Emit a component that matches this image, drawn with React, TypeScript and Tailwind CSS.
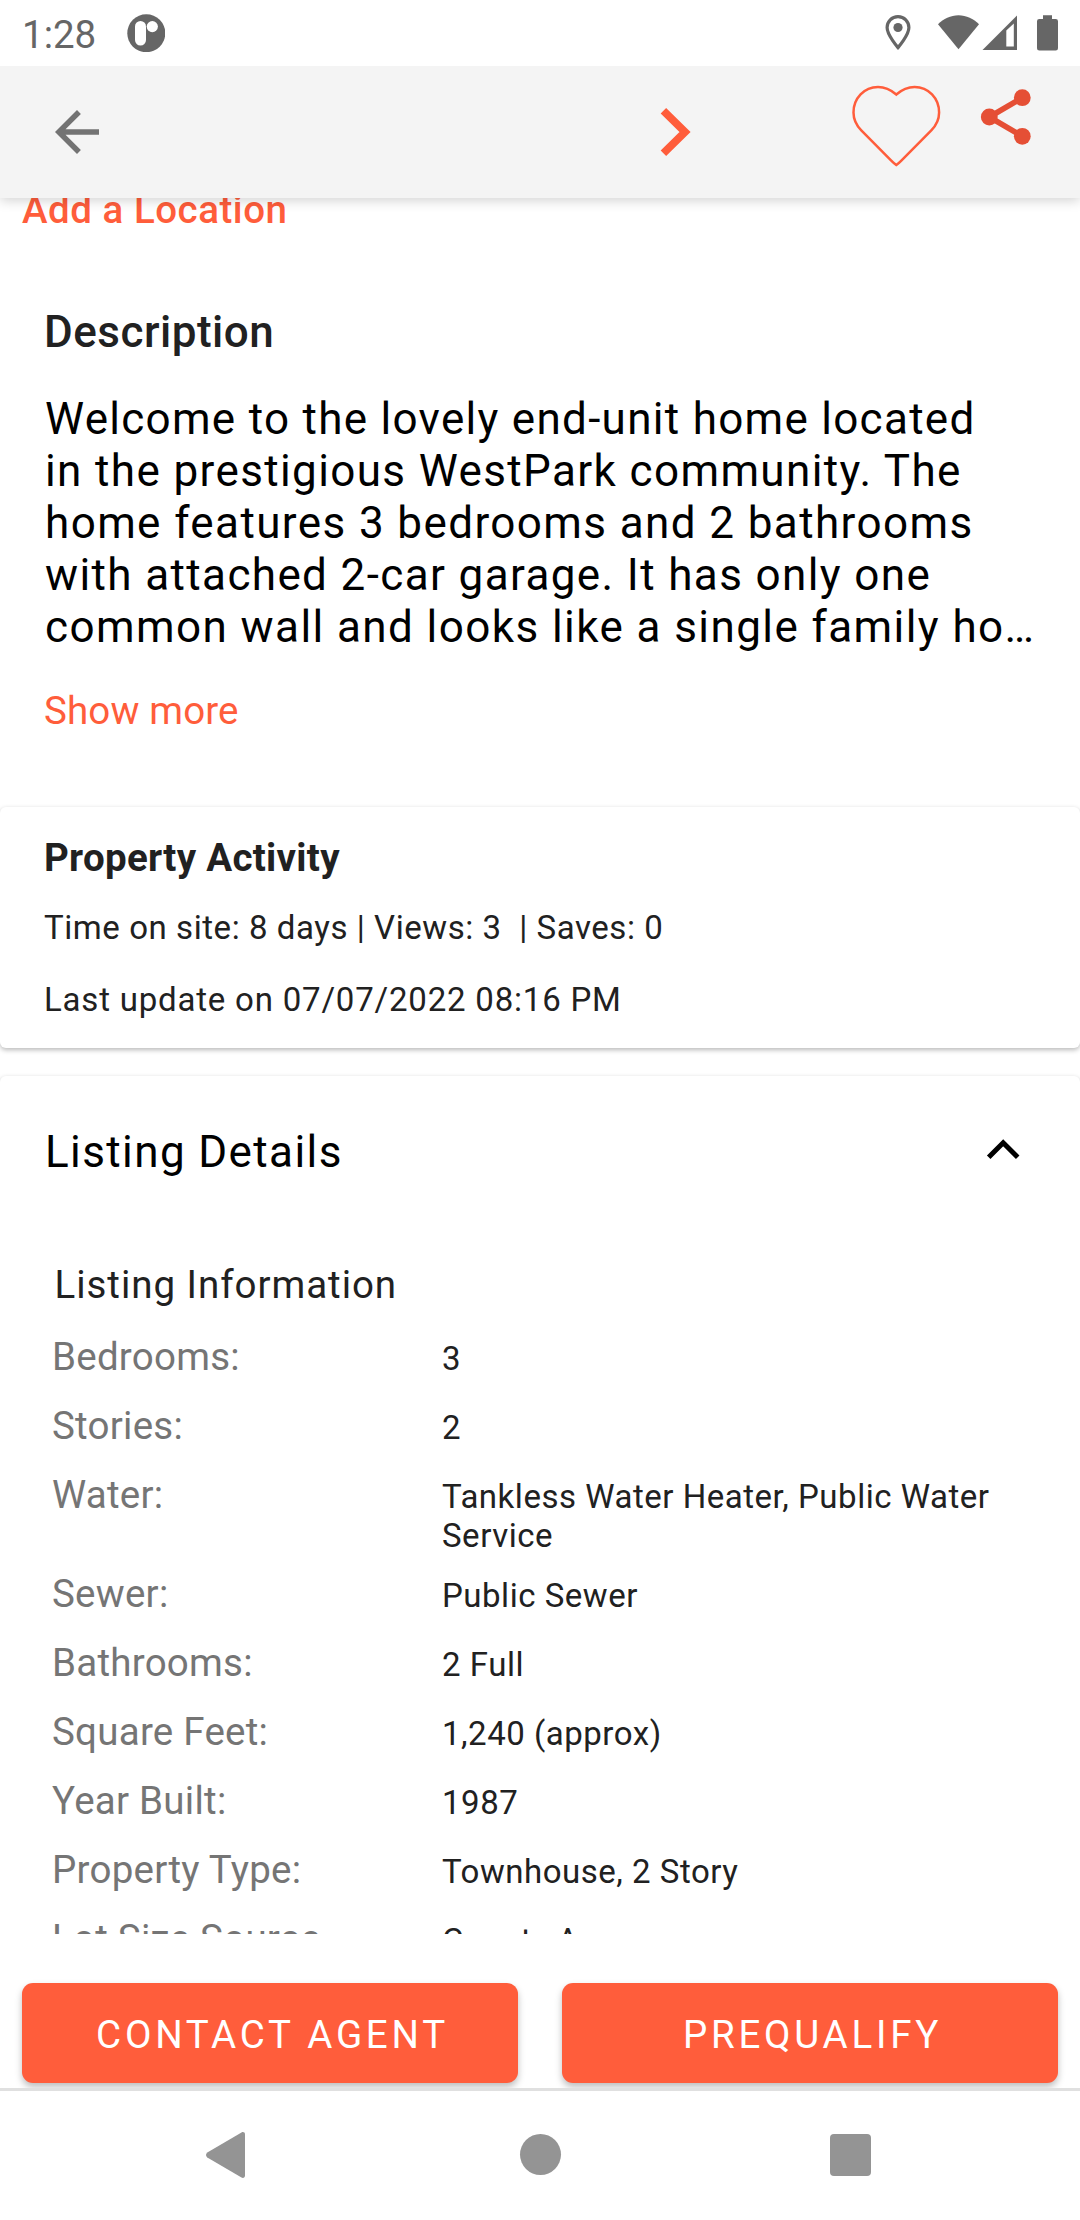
const description = [
  { text: "Welcome to the lovely end-unit home located", tracking: "tracking-[1.29px]" },
  { text: "in the prestigious WestPark community. The", tracking: "tracking-[1.38px]" },
  { text: "home features 3 bedrooms and 2 bathrooms", tracking: "tracking-[1.4px]" },
  { text: "with attached 2-car garage. It has only one", tracking: "tracking-[1.38px]" },
  { text: "common wall and looks like a single family ho…", tracking: "tracking-[1.42px]" },
];

const details = [
  { label: "Bedrooms:", lines: ["3"] },
  { label: "Stories:", lines: ["2"] },
  { label: "Water:", lines: ["Tankless Water Heater, Public Water", "Service"] },
  { label: "Sewer:", lines: ["Public Sewer"] },
  { label: "Bathrooms:", lines: ["2 Full"] },
  { label: "Square Feet:", lines: ["1,240 (approx)"] },
  { label: "Year Built:", lines: ["1987"] },
  { label: "Property Type:", lines: ["Townhouse, 2 Story"] },
  { label: "Lot Size Source", lines: ["County Assessor"] },
];

function StatusBar() {
  return (
    <div className="z-20 flex h-[66px] shrink-0 items-start justify-between bg-white pl-[22px] text-[#666666]">
      <div className="flex">
        <span className="mt-[12px] w-[105px] text-[38.5px] leading-[45px]">1:28</span>
        <svg className="mt-[14px]" width="38" height="38" viewBox="0 0 38 38">
          <circle cx="19.3" cy="19.2" r="19" fill="currentColor" />
          <rect x="8" y="7" width="11" height="24.5" rx="5.5" fill="#fff" />
          <circle cx="25.3" cy="12.6" r="5.6" fill="#fff" />
        </svg>
      </div>
      <svg width="200" height="66" viewBox="880 0 200 66" fill="currentColor">
        <path
          d="M898 16.6c-6.2 0-10.9 4.8-10.9 11 0 7.6 10.9 20 10.9 20s10.9-12.4 10.9-20c0-6.2-4.7-11-10.9-11z"
          fill="none"
          stroke="currentColor"
          strokeWidth="3.2"
        />
        <circle cx="898" cy="27.5" r="4.6" />
        <path d="M958.5 49.3 938 24.3c5.5-5.6 12.6-9.1 20.5-9.1s15 3.5 20.5 9.1z" />
        <path fillRule="evenodd" d="M982.500 50 1017 15.500V50zM1006.300 30.500V46.500h7.500V23.500z" />
        <path d="M1043 15.300h9v3.700h3.700a2.300 2.300 0 0 1 2.300 2.300v27a2.300 2.300 0 0 1-2.300 2.300h-16.400a2.300 2.300 0 0 1-2.300-2.300v-27a2.300 2.300 0 0 1 2.300-2.300h3.700z" />
      </svg>
    </div>
  );
}

function AppBar() {
  return (
    <header className="z-10 flex h-[132px] shrink-0 bg-[#f4f4f4] shadow-[0_3px_11px_rgba(0,0,0,0.17)]">
      <svg className="mt-[33px] ml-[44px]" width="66" height="66" viewBox="0 0 24 24" fill="#737373">
        <path d="M20 11H7.830l5.590-5.590L12 4l-8 8 8 8 1.410-1.410L7.830 13H20z" />
      </svg>
      <svg className="mt-[36px] ml-[544px]" width="50" height="60" viewBox="654 102 50 60">
        <path d="M663.400 110.800 685 132l-21.600 21.200" fill="none" stroke="#ff5d3b" strokeWidth="7.800" />
      </svg>
      <svg className="mt-[14px] ml-[142px]" width="96" height="92" viewBox="846 80 96 92">
        <path
          d="M896.300 94.500C890.500 89.500 884.800 87 878 87c-13.800 0-24.500 11.300-24.500 25.400 0 6.800 2.700 12.700 7.800 17.900l29.700 30c2 2 3.500 3.400 5.300 4.700 1.800-1.300 3.300-2.700 5.300-4.700l29.700-30c5.100-5.200 7.800-11.100 7.800-17.900C939.100 98.300 928.400 87 914.600 87c-6.800 0-12.500 2.500-18.300 7.500z"
          fill="none"
          stroke="#ff5d3b"
          strokeWidth="2.500"
        />
      </svg>
      <svg className="mt-[14px] ml-[33px]" width="64" height="72" viewBox="975 80 64 72" fill="#e54f35">
        <path d="M1022.300 97.700 989.300 117l33 19.300" fill="none" stroke="#e54f35" strokeWidth="5.700" />
        <circle cx="1022.300" cy="97.700" r="8.400" />
        <circle cx="989.300" cy="117" r="8.400" />
        <circle cx="1022.300" cy="136.300" r="8.400" />
      </svg>
    </header>
  );
}

function ActionButton({ children }: { children: string }) {
  return (
    <button className="h-[100px] flex-1 rounded-[11px] bg-[#ff5d3b] pt-[29px] pl-[5px] text-[38.5px] leading-[45px] tracking-[3.75px] text-white shadow-[0_4px_7px_rgba(0,0,0,0.26)]">
      <span className="block h-[71px]">{children}</span>
    </button>
  );
}

export default function App() {
  return (
    <div className="flex h-[2220px] w-[1080px] flex-col overflow-hidden bg-white font-['Roboto',sans-serif] text-[#212121]">
      <StatusBar />
      <AppBar />

      <main className="h-[1736px] shrink-0 overflow-hidden">
        <div className="-mt-[11px] pl-[22px] text-[38.5px] leading-[45px] font-medium tracking-[0.52px] text-[#ff5d3b]">
          Add a Location
        </div>

        <section className="mt-[74px] px-[44px]">
          <h2 className="text-[44px] leading-[52px] font-medium tracking-[0.5px]">Description</h2>
          <p className="mt-[35px] ml-px text-[44px] leading-[52px] whitespace-nowrap text-black">
            {description.map(({ text, tracking }) => (
              <span key={text} className={`block ${tracking}`}>
                {text}
              </span>
            ))}
          </p>
          <div className="mt-[35px] text-[38.5px] leading-[45px] tracking-[0.15px] text-[#ff5d3b]">Show more</div>
        </section>

        <section className="mt-[74px] h-[241px] rounded-[6px] bg-white px-[44px] pt-[28px] shadow-[0_2px_5px_rgba(0,0,0,0.28)]">
          <h3 className="text-[38.5px] leading-[45px] font-bold tracking-[0.3px]">Property Activity</h3>
          <p className="mt-[28px] text-[33px] leading-[39px] tracking-[0.56px] whitespace-pre">
            {"Time on site: 8 days | Views: 3  | Saves: 0"}
          </p>
          <p className="mt-[33px] text-[33px] leading-[39px] tracking-[0.8px]">Last update on 07/07/2022 08:16 PM</p>
        </section>

        <section className="mt-[28px] h-[1100px] rounded-[6px] bg-white pt-[50px] shadow-[0_2px_5px_rgba(0,0,0,0.28)]">
          <div className="flex justify-between pr-[60px] pl-[45px]">
            <h3 className="text-[44px] leading-[52px] tracking-[1.4px] text-black">Listing Details</h3>
            <svg className="mt-[12px]" width="34" height="24" viewBox="986 1138 34 24">
              <path d="m988.700 1157.300 14.500-14.500 14.500 14.500" fill="none" stroke="#000" strokeWidth="5" />
            </svg>
          </div>
          <h4 className="mt-[84px] pl-[54.5px] text-[38.5px] leading-[45px] tracking-[0.96px]">Listing Information</h4>
          <dl className="mt-[27px] pl-[52px]">
            {details.map(({ label, lines }) => (
              <div
                key={label}
                className={lines.length > 1 ? "flex h-[99px] items-baseline" : "flex h-[69px] items-baseline"}
              >
                <dt className="w-[390px] text-[38.5px] leading-[45px] tracking-[0.25px] text-[#757575]">{label}</dt>
                <dd className="text-[33px] leading-[39px] tracking-[0.52px]">
                  {lines.map((line) => (
                    <span key={line} className="block">
                      {line}
                    </span>
                  ))}
                </dd>
              </div>
            ))}
          </dl>
        </section>
      </main>

      <footer className="flex h-[154px] shrink-0 items-start gap-[44px] px-[22px] pt-[49px]">
        <ActionButton>CONTACT AGENT</ActionButton>
        <ActionButton>PREQUALIFY</ActionButton>
      </footer>

      <nav className="z-10 flex h-[132px] shrink-0 items-start border-t-3 border-[#e0e0e0] bg-white pt-[41px] pl-[206px] text-[#949494]">
        <svg width="39" height="46" viewBox="0 0 39 46" fill="currentColor">
          <path d="M1.300 20.400 35.500.4c1.700-.9 3.500 0 3.500 2v41.200c0 2-1.800 2.900-3.500 2L1.300 25.400c-1.700-1.300-1.700-3.700 0-5z" />
        </svg>
        <div className="mt-[1.500px] ml-[274.500px] size-[41px] rounded-full bg-[#949494]" />
        <div className="mt-[2px] ml-[269px] h-[42px] w-[41.500px] rounded-[4px] bg-[#949494]" />
      </nav>
    </div>
  );
}
